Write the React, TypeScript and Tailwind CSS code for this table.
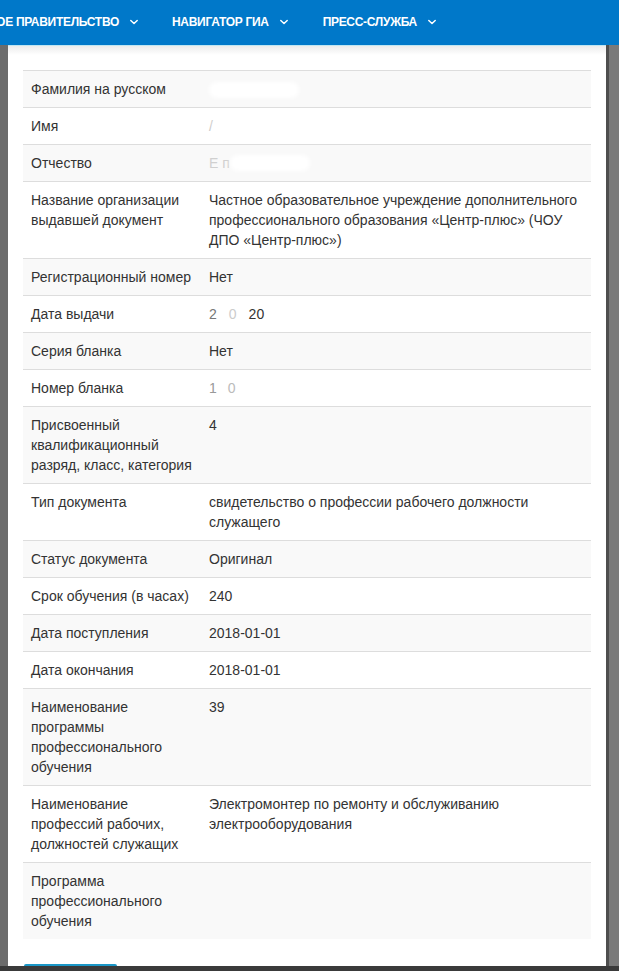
import React from "react"

type Row = { label: string; value: React.ReactNode }

function Chevron() {
  return (
    <svg viewBox="0 0 10 6" className="ml-[11px] h-[6px] w-[8px] shrink-0" fill="none">
      <path d="M1 1l4 4 4-4" stroke="currentColor" strokeWidth="1.8" strokeLinecap="round" strokeLinejoin="round" />
    </svg>
  )
}

function Redacted({ w }: { w: string }) {
  return <span className={`inline-block h-[16px] rounded-full bg-white align-middle blur-[2px] ${w}`} />
}

const rows: Row[] = [
  { label: "Фамилия на русском", value: <Redacted w="w-[90px]" /> },
  {
    label: "Имя",
    value: (
      <span className="inline-flex items-center">
        <span className="text-[#c8c8c8]">/</span>
        <Redacted w="w-[50px]" />
      </span>
    ),
  },
  {
    label: "Отчество",
    value: (
      <span className="inline-flex items-center">
        <span className="text-[#d0d0d0]">Е п</span>
        <Redacted w="w-[80px]" />
      </span>
    ),
  },
  {
    label: "Название организации выдавшей документ",
    value:
      "Частное образовательное учреждение дополнительного профессионального образования «Центр-плюс» (ЧОУ ДПО «Центр-плюс»)",
  },
  { label: "Регистрационный номер", value: "Нет" },
  {
    label: "Дата выдачи",
    value: (
      <span>
        <span className="text-[#777]">2</span>
        <span className="ml-[12px] text-[#ccc]">0</span>
        <span className="ml-[12px]">20</span>
      </span>
    ),
  },
  { label: "Серия бланка", value: "Нет" },
  {
    label: "Номер бланка",
    value: (
      <span>
        <span className="text-[#999]">1</span>
        <span className="ml-[11px] text-[#bbb]">0</span>
      </span>
    ),
  },
  { label: "Присвоенный квалификационный разряд, класс, категория", value: "4" },
  { label: "Тип документа", value: "свидетельство о профессии рабочего должности служащего" },
  { label: "Статус документа", value: "Оригинал" },
  { label: "Срок обучения (в часах)", value: "240" },
  { label: "Дата поступления", value: "2018-01-01" },
  { label: "Дата окончания", value: "2018-01-01" },
  { label: "Наименование программы профессионального обучения", value: "39" },
  {
    label: "Наименование профессий рабочих, должностей служащих",
    value: "Электромонтер по ремонту и обслуживанию электрооборудования",
  },
  { label: "Программа профессионального обучения", value: "" },
]

export default function App() {
  return (
    <div className="flex h-[971px] w-[619px] flex-col overflow-hidden bg-[#767676] font-['Liberation_Sans',Arial,sans-serif]">
      <nav className="flex h-[45px] shrink-0 items-center bg-[#0078c9] pb-[2px] text-[12px] font-bold uppercase tracking-[-0.3px] text-white">
        <div className="flex w-[138px] shrink-0 items-center justify-end overflow-hidden whitespace-nowrap">
          <span>Открытое правительство</span>
          <Chevron />
        </div>
        <div className="ml-[34px] flex items-center whitespace-nowrap">
          <span>Навигатор ГИА</span>
          <Chevron />
        </div>
        <div className="ml-[35px] flex items-center whitespace-nowrap">
          <span>Пресс-служба</span>
          <Chevron />
        </div>
      </nav>

      <div className="flex min-h-0 flex-1">
        <div className="w-[8px] shrink-0 bg-[#6c6c6c]" />

        <div className="flex w-[598px] shrink-0 flex-col overflow-hidden bg-white">
          <div className="h-px shrink-0 bg-[#bfe6f2]" />
          <div className="h-[9px] shrink-0 bg-linear-to-b from-[#ececec] to-white" />

          <div className="shrink-0 px-[15px] pt-[15px]">
            <table className="w-full border-collapse text-[14px] leading-[20px] text-[#333]">
              <tbody>
                {rows.map((r, i) => (
                  <tr key={r.label} className={i % 2 === 0 ? "bg-[#f9f9f9]" : "bg-white"}>
                    <td className="w-[178px] border-t border-[#ddd] p-[8px] align-top">{r.label}</td>
                    <td className="border-t border-[#ddd] p-[8px] align-top">{r.value}</td>
                  </tr>
                ))}
              </tbody>
            </table>
          </div>

          <div className="shrink-0 px-[16px] pt-[25px]">
            <div className="h-[34px] w-[93px] rounded-[2px] bg-[#1b97c7]" />
          </div>
        </div>

        <div className="flex-1 border-l-[3px] border-[#4e4e4e] bg-[#7a7a7a]" />
      </div>

      <div className="h-[5px] shrink-0 bg-[#3a3a3a]" />
    </div>
  )
}
